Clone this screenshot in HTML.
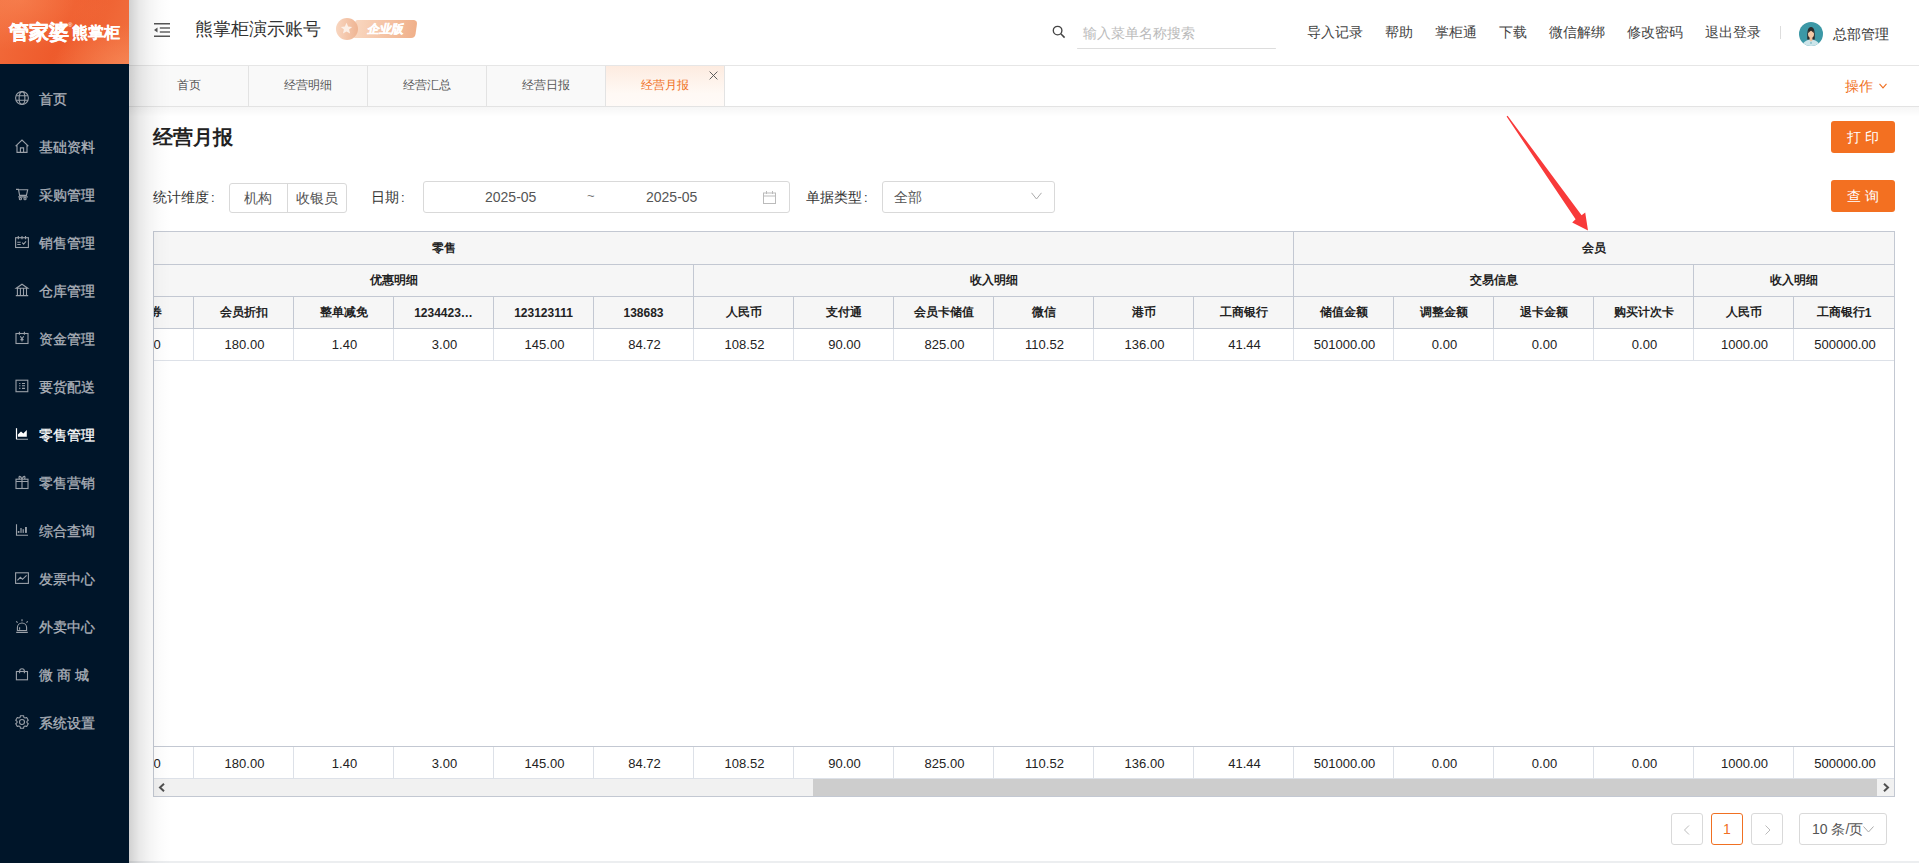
<!DOCTYPE html><html><head><meta charset="utf-8"><style>
*{box-sizing:border-box;margin:0;padding:0}
html,body{width:1919px;height:863px;overflow:hidden;background:#fff;font-family:"Liberation Sans",sans-serif;color:#333;position:relative}
.a{position:absolute;white-space:nowrap}
#side{position:absolute;left:0;top:0;width:129px;height:863px;background:#001529;z-index:6}
#logo{position:absolute;left:0;top:0;width:129px;height:64px;background:radial-gradient(ellipse 90px 50px at 20px 0px,rgba(255,160,110,0.35),rgba(255,160,110,0) 100%),radial-gradient(ellipse 80px 40px at 129px 64px,rgba(255,170,120,0.35),rgba(255,170,120,0) 100%),linear-gradient(110deg,#f26c3c 0%,#ee5a2b 50%,#f1703f 100%);overflow:hidden}
.mi{position:absolute;left:0;width:129px;height:48px;color:#acb1b9;font-size:14px;line-height:48px}
.mi .t{-webkit-text-stroke:0.3px currentColor}
.mi .t{position:absolute;left:39px;top:0;white-space:nowrap}
.mi svg{position:absolute;left:15px;top:16px;overflow:visible;color:#9ba1a9}
.mi.on svg{color:#fff}
.mi.on{color:#fff}
#shadow{position:absolute;left:129px;top:0;width:42px;height:863px;background:linear-gradient(90deg,rgba(0,0,0,0.18),rgba(0,0,0,0.09) 24%,rgba(0,0,0,0.045) 48%,rgba(0,0,0,0.015) 72%,rgba(0,0,0,0));z-index:5}
#hdr{position:absolute;left:129px;top:0;width:1790px;height:66px;background:#fff;border-bottom:1px solid #e6e6e6}
#tabs{position:absolute;left:129px;top:66px;width:1790px;height:41px;background:#fff;border-bottom:1px solid #e3e3e3}
.tab{position:absolute;top:0;height:40px;width:119px;border-right:1px solid #e3e3e3;background:#f9f9f9;color:#555;font-size:12px;line-height:38px;text-align:center}
.tab.act{background:linear-gradient(180deg,#fdebe0,#fff9f5 70%,#fffaf7);color:#f07022}
#tabshadow{position:absolute;left:129px;top:107px;width:1790px;height:10px;background:linear-gradient(180deg,rgba(0,0,0,0.035),rgba(0,0,0,0))}
.hl{position:absolute;top:23px;font-size:14px;color:#444;line-height:18px;white-space:nowrap}
.btn{position:absolute;left:1831px;width:64px;height:32px;background:#f37021;color:#fff;border-radius:3px;font-size:14px;line-height:32px;text-align:center;letter-spacing:4px;text-indent:4px}
.lbl{position:absolute;top:187px;font-size:14px;color:#333;line-height:20px;white-space:nowrap}
.inp{position:absolute;border:1px solid #d9d9d9;border-radius:3px;background:#fff}
#tbl{position:absolute;left:153px;top:231px;width:1742px;height:566px;border:1px solid #c3c8d2;overflow:hidden;background:#fff}
.c{position:absolute;text-align:center;white-space:nowrap}
.h{background:#f6f6f6;font-weight:bold;color:#222;font-size:12px;border-right:1px solid #c3c8d2;border-bottom:1px solid #c3c8d2}
.d{color:#222;font-size:13px;padding-left:2px;border-right:1px solid #dde1e8;border-bottom:1px solid #dde1e8}
.pg{position:absolute;top:813px;height:32px;border:1px solid #d9d9d9;border-radius:3px;background:#fff;text-align:center;line-height:30px;font-size:14px;color:#bbb}
</style></head><body><div id="side"><div id="logo"><div class="a" style="left:9px;top:20px;font-size:19.5px;line-height:24px;font-weight:900;color:#fff;letter-spacing:0px;-webkit-text-stroke:0.45px #fff">管家婆</div><div class="a" style="left:68px;top:22px;font-size:6px;line-height:6px;color:#fff">®</div><div class="a" style="left:72px;top:23px;font-size:15.5px;line-height:20px;font-weight:900;color:#fff;letter-spacing:0px;-webkit-text-stroke:0.15px #fff">熊掌柜</div></div><div class="mi" style="top:75px"><svg width="14" height="14" viewBox="0 0 14 14"><g fill="none" stroke="currentColor" stroke-width="1.1"><circle cx="7" cy="7" r="6.4"/><ellipse cx="7" cy="7" rx="2.9" ry="6.4"/><path d="M1.2 4.7H12.8M1.2 9.3H12.8"/></g></svg><span class="t">首页</span></div><div class="mi" style="top:123px"><svg width="14" height="14" viewBox="0 0 14 14"><g fill="none" stroke="currentColor" stroke-width="1.1"><path d="M0.6 7.2L7 1.1L13.4 7.2M2 5.9V13.4H12V5.9M5.4 13.4V8.9H8.6V13.4"/></g></svg><span class="t">基础资料</span></div><div class="mi" style="top:171px"><svg width="14" height="14" viewBox="0 0 14 14"><g fill="none" stroke="currentColor" stroke-width="1.1"><path d="M1 2.4H3.5L4.6 8.4H11.4L12.7 2.7H3.8M3.2 9.9H12.8"/><circle cx="5.4" cy="11.7" r="1.1"/><circle cx="10" cy="11.7" r="1.1"/></g></svg><span class="t">采购管理</span></div><div class="mi" style="top:219px"><svg width="14" height="14" viewBox="0 0 14 14"><g fill="none" stroke="currentColor" stroke-width="1.1"><rect x="0.6" y="2.7" width="12.8" height="9.8"/><path d="M3.3 1V4.2M7 1V4.2M10.5 1V4.2M2.3 7.3H5.7M2.3 9.5H5.7M7.2 7.6L8.6 9.1L11 6.3"/></g></svg><span class="t">销售管理</span></div><div class="mi" style="top:267px"><svg width="14" height="14" viewBox="0 0 14 14"><g fill="none" stroke="currentColor" stroke-width="1.1"><path d="M1.2 5.3L7 1.2L12.8 5.3ZM2.4 5.3V12.5M5.4 5.3V12.5M8.5 5.3V12.5M11.5 5.3V12.5M0.8 12.6H13.2"/></g></svg><span class="t">仓库管理</span></div><div class="mi" style="top:315px"><svg width="14" height="14" viewBox="0 0 14 14"><g fill="none" stroke="currentColor" stroke-width="1.1"><rect x="1" y="2.5" width="12" height="10"/><path d="M4.4 0.8V3.8M9.4 0.8V3.8M5.3 5.3L7 7.9L8.7 5.3M7 7.9V10.6M5.4 8.6H8.6"/></g></svg><span class="t">资金管理</span></div><div class="mi" style="top:363px"><svg width="14" height="14" viewBox="0 0 14 14"><g fill="none" stroke="currentColor" stroke-width="1.1"><rect x="1" y="1.2" width="11.8" height="11.5"/><path d="M4.2 4.5H5.4M7 4.5H10M4.2 6.8H5.4M7 6.8H10M4.2 9.4H5.4M7 9.4H10"/></g></svg><span class="t">要货配送</span></div><div class="mi on" style="top:411px"><svg width="14" height="14" viewBox="0 0 14 14"><g><path d="M1.5 1.2V12.3" fill="none" stroke="currentColor" stroke-width="1.2"/><path d="M1.5 12.3H13" fill="none" stroke="currentColor" stroke-width="1.2" opacity="0.55"/><path d="M2.9 9.8V7.4L6 4.6L8.3 6.4L11.8 2.9V9.8Z" fill="currentColor"/></g></svg><span class="t">零售管理</span></div><div class="mi" style="top:459px"><svg width="14" height="14" viewBox="0 0 14 14"><g fill="none" stroke="currentColor" stroke-width="1.1"><rect x="1" y="4.2" width="12" height="9.3"/><path d="M1 6.5H13M7 4.2V13.5"/><path d="M7 4.2C5.8 0.6 3 0.2 4.4 4.2M7 4.2C8.2 0.6 11 0.2 9.6 4.2"/></g></svg><span class="t">零售营销</span></div><div class="mi" style="top:507px"><svg width="14" height="14" viewBox="0 0 14 14"><g fill="none" stroke="currentColor" stroke-width="1.1"><path d="M1.5 1.2V12.3H13"/></g><g fill="currentColor"><rect x="2.8" y="8" width="1.6" height="1.9"/><rect x="5.4" y="5" width="1.2" height="4.9"/><rect x="7.6" y="6.2" width="1.2" height="3.7"/><rect x="10" y="4" width="1.9" height="5.9"/></g></svg><span class="t">综合查询</span></div><div class="mi" style="top:555px"><svg width="14" height="14" viewBox="0 0 14 14"><g fill="none" stroke="currentColor" stroke-width="1.1"><rect x="0.6" y="1.8" width="12.8" height="10.6"/><path d="M2.4 9.4L5.4 6.3L7.5 8.3L11.6 4.4"/></g></svg><span class="t">发票中心</span></div><div class="mi" style="top:603px"><svg width="14" height="14" viewBox="0 0 14 14"><g fill="none" stroke="currentColor" stroke-width="1.1"><path d="M2.4 11.5V8.6A4.6 4.6 0 0 1 11.6 8.6V11.5Z"/><path d="M1.2 13.4H12.8M7 0.2V2.2M1.2 2.4L2.6 3.7M12.8 2.4L11.4 3.7M4.6 8.3V10.8"/></g></svg><span class="t">外卖中心</span></div><div class="mi" style="top:651px"><svg width="14" height="14" viewBox="0 0 14 14"><g fill="none" stroke="currentColor" stroke-width="1.1"><rect x="1.4" y="4.5" width="11.1" height="8.3"/><path d="M4.6 6.2V4.2A2.4 2.4 0 0 1 9.4 4.2V6.2"/></g></svg><span class="t">微 商 城</span></div><div class="mi" style="top:699px"><svg width="14" height="14" viewBox="0 0 14 14"><g fill="none" stroke="currentColor" stroke-width="1.1"><path d="M5.43 0.69 L8.57 0.69 L8.87 2.36 L10.08 3.06 L11.68 2.48 L13.25 5.21 L11.95 6.30 L11.95 7.70 L13.25 8.79 L11.68 11.52 L10.08 10.94 L8.87 11.64 L8.57 13.31 L5.43 13.31 L5.13 11.64 L3.92 10.94 L2.32 11.52 L0.75 8.79 L2.05 7.70 L2.05 6.30 L0.75 5.21 L2.32 2.48 L3.92 3.06 L5.13 2.36Z" stroke-linejoin="round"/><circle cx="7" cy="7" r="2.5"/></g></svg><span class="t">系统设置</span></div></div><div id="hdr"></div><svg class="a" style="left:154px;top:23px" width="17" height="14" viewBox="0 0 17 14"><g fill="none" stroke="#555" stroke-width="1.5"><path d="M0 0.8H16M0 13.2H16"/><path d="M5.8 5H16M5.8 9H16" stroke="#666" stroke-width="1.3"/></g><path d="M0 7L3.5 4.4V9.6Z" fill="#555"/></svg><div class="a" style="left:195px;top:17px;font-size:18px;line-height:24px;color:#333">熊掌柜演示账号</div><div class="a" style="left:353px;top:20px;width:62px;height:18px;border-radius:2px 4px 4px 2px;background:linear-gradient(90deg,#f9d7c0,#f0b08a);transform:skewX(-8deg);transform-origin:0 100%"></div><div class="a" style="left:336px;top:18px;width:22px;height:22px;border-radius:50%;background:linear-gradient(90deg,#f8d6c0,#efb492)"></div><svg class="a" style="left:340px;top:22px" width="13" height="13" viewBox="0 0 12 12"><path d="M6 0.8L7.5 4.2L11.2 4.5L8.4 7L9.3 10.7L6 8.8L2.7 10.7L3.6 7L0.8 4.5L4.5 4.2Z" fill="#fcefe6"/></svg><div class="a" style="left:368px;top:20px;font-size:12px;line-height:18px;color:#fff;font-weight:900;-webkit-text-stroke:0.4px #fff;transform:skewX(-12deg)">企业版</div><svg class="a" style="left:1052px;top:25px" width="14" height="14" viewBox="0 0 14 14"><circle cx="5.6" cy="5.6" r="4.3" fill="none" stroke="#444" stroke-width="1.35"/><path d="M8.8 8.8L12.6 12.6" stroke="#444" stroke-width="1.5"/></svg><div class="a" style="left:1077px;top:48px;width:199px;height:1px;background:#ddd;border-radius:1px"></div><div class="a" style="left:1083px;top:24px;font-size:14px;line-height:18px;color:#bbb">输入菜单名称搜索</div><div class="hl" style="left:1307px">导入记录</div><div class="hl" style="left:1385px">帮助</div><div class="hl" style="left:1435px">掌柜通</div><div class="hl" style="left:1499px">下载</div><div class="hl" style="left:1549px">微信解绑</div><div class="hl" style="left:1627px">修改密码</div><div class="hl" style="left:1705px">退出登录</div><div class="a" style="left:1780px;top:26px;width:1px;height:13px;background:#ddd"></div><svg class="a" style="left:1799px;top:22px" width="24" height="24" viewBox="0 0 24 24"><defs><clipPath id="av"><circle cx="12" cy="12" r="12"/></clipPath></defs><circle cx="12" cy="12" r="12" fill="#3c98a6"/><g clip-path="url(#av)"><path d="M8.3 17.5C8 10 8.5 5 12 5C15.5 5 16 10 15.7 17.5Z" fill="#2b2b2b"/><path d="M3.5 24C4 19.5 8 17.8 12 17.8C16 17.8 20 19.5 20.5 24Z" fill="#cde5ea"/><path d="M10.6 15H13.4V18.6L12 19.4L10.6 18.6Z" fill="#efbf9c"/><ellipse cx="12" cy="12" rx="3" ry="3.8" fill="#f4c9a7"/><path d="M9 11C9.2 8 10.5 7.2 12 7.2C13.5 7.2 14.8 8 15 11C13.5 10 12.5 9 12 8.6C11.5 9 10.5 10 9 11Z" fill="#2b2b2b"/><path d="M12 19.4L11.3 21.5H12.7Z" fill="#3c98a6"/></g></svg><div class="hl" style="left:1833px;top:25px;color:#333">总部管理</div><div id="tabs"><div class="tab" style="left:1px">首页</div><div class="tab" style="left:120px">经营明细</div><div class="tab" style="left:239px">经营汇总</div><div class="tab" style="left:358px">经营日报</div><div class="tab act" style="left:477px">经营月报</div><svg class="a" style="left:580px;top:5px" width="9" height="9" viewBox="0 0 9 9"><path d="M0.6 0.6L8.4 8.4M8.4 0.6L0.6 8.4" stroke="#555" stroke-width="0.95"/></svg><div class="a" style="left:1716px;top:11px;font-size:14px;line-height:18px;color:#f07022">操作</div><svg class="a" style="left:1750px;top:17px" width="8" height="6" viewBox="0 0 8 6"><path d="M0.5 0.8L4 4.8L7.5 0.8" fill="none" stroke="#f07022" stroke-width="1.1"/></svg></div><div id="tabshadow"></div><div id="shadow"></div><div class="a" style="left:153px;top:125px;font-size:20px;line-height:24px;font-weight:bold;color:#222">经营月报</div><div class="btn" style="top:121px">打印</div><div class="btn" style="top:180px">查询</div><div class="lbl" style="left:153px">统计维度<span style="margin-left:2px;font-size:13px">:</span></div><div class="inp" style="left:229px;top:183px;width:118px;height:30px"></div><div class="a" style="left:287px;top:184px;width:1px;height:28px;background:#d9d9d9"></div><div class="a" style="left:244px;top:188px;font-size:14px;line-height:20px;color:#555">机构</div><div class="a" style="left:296px;top:188px;font-size:14px;line-height:20px;color:#555">收银员</div><div class="lbl" style="left:371px">日期<span style="margin-left:2px;font-size:13px">:</span></div><div class="inp" style="left:423px;top:181px;width:367px;height:32px"></div><div class="a" style="left:485px;top:187px;font-size:14px;line-height:20px;color:#555">2025-05</div><div class="a" style="left:587px;top:186px;font-size:13px;line-height:20px;color:#777">~</div><div class="a" style="left:646px;top:187px;font-size:14px;line-height:20px;color:#555">2025-05</div><svg class="a" style="left:763px;top:191px" width="14" height="13" viewBox="0 0 14 13"><g fill="none" stroke="#bbb" stroke-width="1"><rect x="0.5" y="2" width="12" height="10.5"/><path d="M0.5 5H12.5M3.5 0V3M9.5 0V3"/></g></svg><div class="lbl" style="left:806px">单据类型<span style="margin-left:2px;font-size:13px">:</span></div><div class="inp" style="left:882px;top:181px;width:173px;height:32px"></div><div class="a" style="left:894px;top:187px;font-size:14px;line-height:20px;color:#555">全部</div><svg class="a" style="left:1031px;top:192px" width="11" height="8" viewBox="0 0 11 8"><path d="M0.5 0.8L5.5 7L10.5 0.8" fill="none" stroke="#aaa" stroke-width="1"/></svg><svg class="a" style="left:0;top:0;z-index:3" width="1919" height="300" viewBox="0 0 1919 300"><path d="M1507.6 115.8L1581.6 215.2L1585.2 212.4L1588 230.4L1572.2 222.4L1575.6 219.3L1506.6 116.6Z" fill="#f83a3a"/></svg><div id="tbl"><div class="a" style="left:0;top:0;width:1740px;height:97px;background:#f6f6f6"></div><div class="c h" style="left:-560px;top:0px;width:1700px;height:33px;line-height:32px">零售</div><div class="c h" style="left:1140px;top:0px;width:601px;height:33px;line-height:32px">会员</div><div class="c h" style="left:-660px;top:33px;width:600px;height:32px;line-height:31px"></div><div class="c h" style="left:-60px;top:33px;width:600px;height:32px;line-height:31px">优惠明细</div><div class="c h" style="left:540px;top:33px;width:600px;height:32px;line-height:31px">收入明细</div><div class="c h" style="left:1140px;top:33px;width:400px;height:32px;line-height:31px">交易信息</div><div class="c h" style="left:1540px;top:33px;width:201px;height:32px;line-height:31px">收入明细</div><div class="c h" style="left:-60px;top:65px;width:100px;height:32px;line-height:31px">优惠券</div><div class="c d" style="left:-60px;top:97px;width:100px;height:32px;line-height:31px">20.00</div><div class="c d" style="left:-60px;top:515px;width:100px;height:32px;line-height:31px;padding-top:1px">20.00</div><div class="c h" style="left:40px;top:65px;width:100px;height:32px;line-height:31px">会员折扣</div><div class="c d" style="left:40px;top:97px;width:100px;height:32px;line-height:31px">180.00</div><div class="c d" style="left:40px;top:515px;width:100px;height:32px;line-height:31px;padding-top:1px">180.00</div><div class="c h" style="left:140px;top:65px;width:100px;height:32px;line-height:31px">整单减免</div><div class="c d" style="left:140px;top:97px;width:100px;height:32px;line-height:31px">1.40</div><div class="c d" style="left:140px;top:515px;width:100px;height:32px;line-height:31px;padding-top:1px">1.40</div><div class="c h" style="left:240px;top:65px;width:100px;height:32px;line-height:31px"><span style="position:relative;top:1px">1234423…</span></div><div class="c d" style="left:240px;top:97px;width:100px;height:32px;line-height:31px">3.00</div><div class="c d" style="left:240px;top:515px;width:100px;height:32px;line-height:31px;padding-top:1px">3.00</div><div class="c h" style="left:340px;top:65px;width:100px;height:32px;line-height:31px"><span style="position:relative;top:1px">123123111</span></div><div class="c d" style="left:340px;top:97px;width:100px;height:32px;line-height:31px">145.00</div><div class="c d" style="left:340px;top:515px;width:100px;height:32px;line-height:31px;padding-top:1px">145.00</div><div class="c h" style="left:440px;top:65px;width:100px;height:32px;line-height:31px"><span style="position:relative;top:1px">138683</span></div><div class="c d" style="left:440px;top:97px;width:100px;height:32px;line-height:31px">84.72</div><div class="c d" style="left:440px;top:515px;width:100px;height:32px;line-height:31px;padding-top:1px">84.72</div><div class="c h" style="left:540px;top:65px;width:100px;height:32px;line-height:31px">人民币</div><div class="c d" style="left:540px;top:97px;width:100px;height:32px;line-height:31px">108.52</div><div class="c d" style="left:540px;top:515px;width:100px;height:32px;line-height:31px;padding-top:1px">108.52</div><div class="c h" style="left:640px;top:65px;width:100px;height:32px;line-height:31px">支付通</div><div class="c d" style="left:640px;top:97px;width:100px;height:32px;line-height:31px">90.00</div><div class="c d" style="left:640px;top:515px;width:100px;height:32px;line-height:31px;padding-top:1px">90.00</div><div class="c h" style="left:740px;top:65px;width:100px;height:32px;line-height:31px">会员卡储值</div><div class="c d" style="left:740px;top:97px;width:100px;height:32px;line-height:31px">825.00</div><div class="c d" style="left:740px;top:515px;width:100px;height:32px;line-height:31px;padding-top:1px">825.00</div><div class="c h" style="left:840px;top:65px;width:100px;height:32px;line-height:31px">微信</div><div class="c d" style="left:840px;top:97px;width:100px;height:32px;line-height:31px">110.52</div><div class="c d" style="left:840px;top:515px;width:100px;height:32px;line-height:31px;padding-top:1px">110.52</div><div class="c h" style="left:940px;top:65px;width:100px;height:32px;line-height:31px">港币</div><div class="c d" style="left:940px;top:97px;width:100px;height:32px;line-height:31px">136.00</div><div class="c d" style="left:940px;top:515px;width:100px;height:32px;line-height:31px;padding-top:1px">136.00</div><div class="c h" style="left:1040px;top:65px;width:100px;height:32px;line-height:31px">工商银行</div><div class="c d" style="left:1040px;top:97px;width:100px;height:32px;line-height:31px">41.44</div><div class="c d" style="left:1040px;top:515px;width:100px;height:32px;line-height:31px;padding-top:1px">41.44</div><div class="c h" style="left:1140px;top:65px;width:100px;height:32px;line-height:31px">储值金额</div><div class="c d" style="left:1140px;top:97px;width:100px;height:32px;line-height:31px">501000.00</div><div class="c d" style="left:1140px;top:515px;width:100px;height:32px;line-height:31px;padding-top:1px">501000.00</div><div class="c h" style="left:1240px;top:65px;width:100px;height:32px;line-height:31px">调整金额</div><div class="c d" style="left:1240px;top:97px;width:100px;height:32px;line-height:31px">0.00</div><div class="c d" style="left:1240px;top:515px;width:100px;height:32px;line-height:31px;padding-top:1px">0.00</div><div class="c h" style="left:1340px;top:65px;width:100px;height:32px;line-height:31px">退卡金额</div><div class="c d" style="left:1340px;top:97px;width:100px;height:32px;line-height:31px">0.00</div><div class="c d" style="left:1340px;top:515px;width:100px;height:32px;line-height:31px;padding-top:1px">0.00</div><div class="c h" style="left:1440px;top:65px;width:100px;height:32px;line-height:31px">购买计次卡</div><div class="c d" style="left:1440px;top:97px;width:100px;height:32px;line-height:31px">0.00</div><div class="c d" style="left:1440px;top:515px;width:100px;height:32px;line-height:31px;padding-top:1px">0.00</div><div class="c h" style="left:1540px;top:65px;width:100px;height:32px;line-height:31px">人民币</div><div class="c d" style="left:1540px;top:97px;width:100px;height:32px;line-height:31px">1000.00</div><div class="c d" style="left:1540px;top:515px;width:100px;height:32px;line-height:31px;padding-top:1px">1000.00</div><div class="c h" style="left:1640px;top:65px;width:101px;height:32px;line-height:31px">工商银行<span style="position:relative;top:1px">1</span></div><div class="c d" style="left:1640px;top:97px;width:101px;height:32px;line-height:31px">500000.00</div><div class="c d" style="left:1640px;top:515px;width:101px;height:32px;line-height:31px;padding-top:1px">500000.00</div><div class="a" style="left:0;top:514px;width:1740px;height:1px;background:#c3c8d2"></div><div class="a" style="left:0;top:547px;width:1740px;height:17px;background:#f1f1f1"></div><div class="a" style="left:659px;top:547px;width:1064px;height:17px;background:#cdcdcd"></div><svg class="a" style="left:4px;top:551px" width="8" height="9" viewBox="0 0 8 9"><path d="M6 0.8L2 4.5L6 8.2" fill="none" stroke="#505050" stroke-width="2"/></svg><svg class="a" style="left:1728px;top:551px" width="8" height="9" viewBox="0 0 8 9"><path d="M2 0.8L6 4.5L2 8.2" fill="none" stroke="#505050" stroke-width="2"/></svg></div><div class="pg" style="left:1671px;width:32px"><svg style="position:absolute;left:11px;top:11px" width="8" height="10" viewBox="0 0 8 10"><path d="M6 0.5L1.5 5L6 9.5" fill="none" stroke="#bbb" stroke-width="1"/></svg></div><div class="pg" style="left:1711px;width:32px;border-color:#f07022;color:#f07022">1</div><div class="pg" style="left:1751px;width:32px"><svg style="position:absolute;left:12px;top:11px" width="8" height="10" viewBox="0 0 8 10"><path d="M1.5 0.5L6 5L1.5 9.5" fill="none" stroke="#bbb" stroke-width="1"/></svg></div><div class="pg" style="left:1799px;width:88px;color:#555;text-align:left;padding-left:12px">10 条/页<svg style="position:absolute;left:63px;top:12px" width="11" height="7" viewBox="0 0 11 7"><path d="M0.5 0.5L5.5 6L10.5 0.5" fill="none" stroke="#aaa" stroke-width="1"/></svg></div><div class="a" style="left:129px;top:861px;width:1790px;height:2px;background:#eceef0"></div></body></html>
